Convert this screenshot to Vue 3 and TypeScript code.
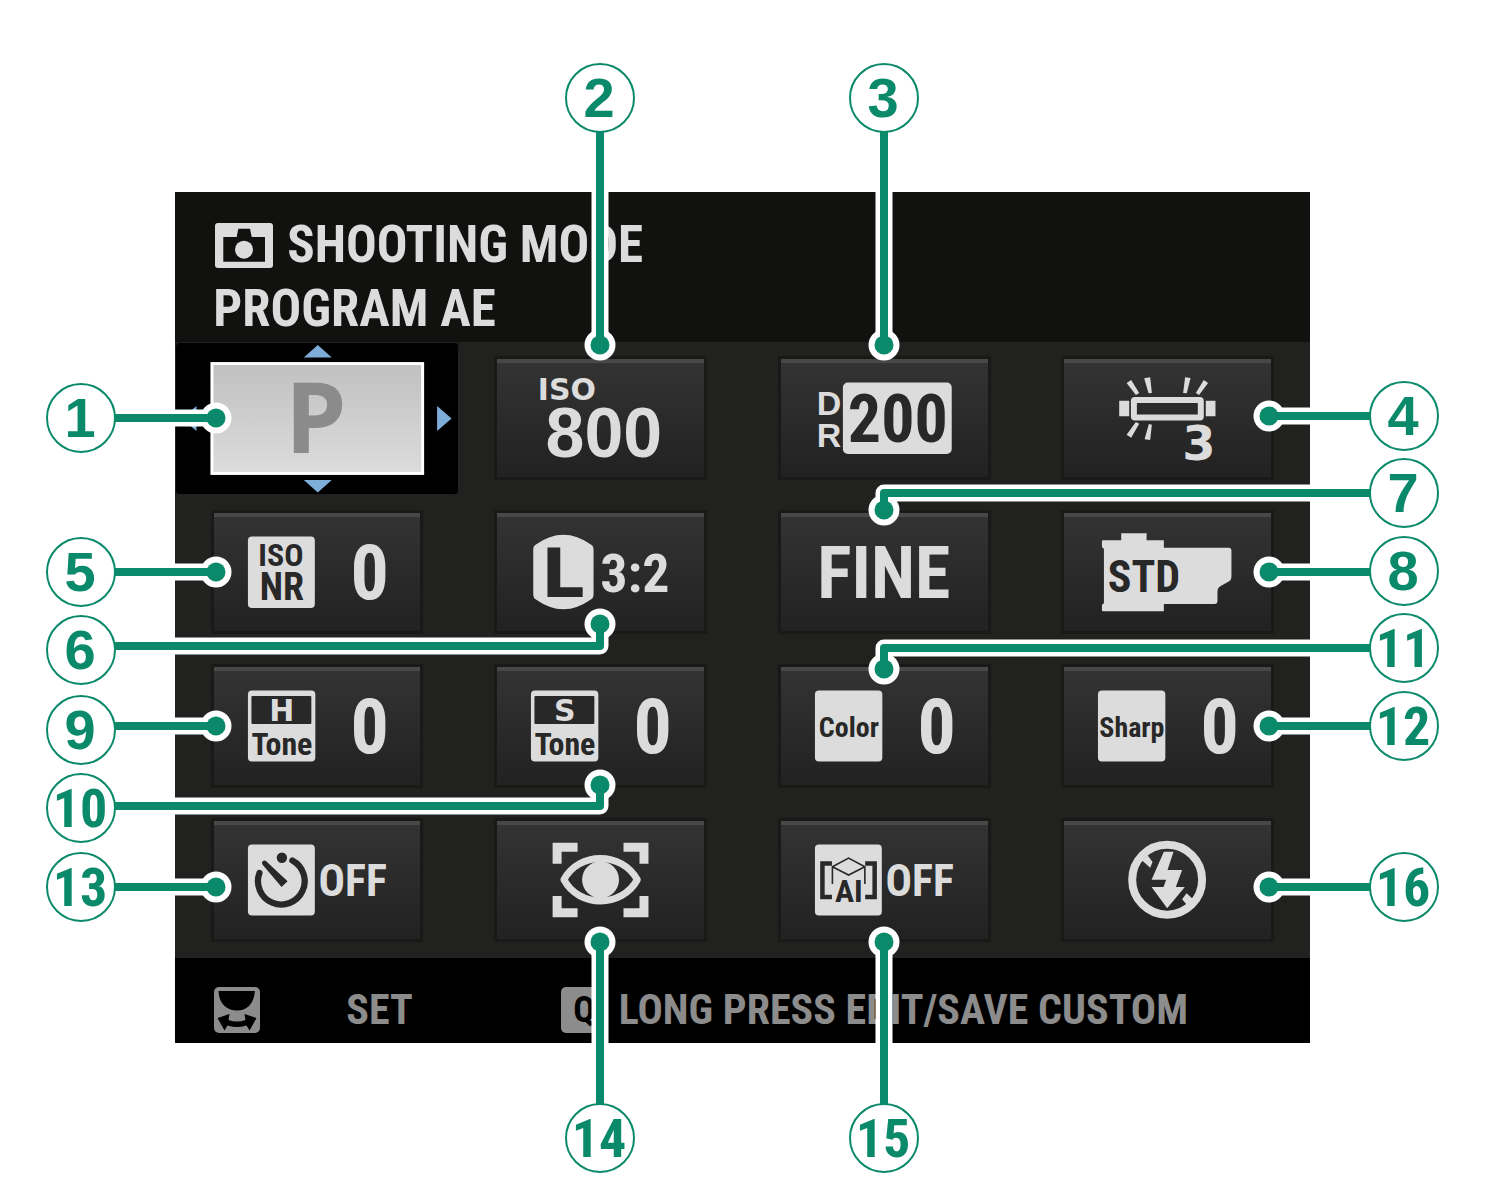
<script setup lang="ts">
interface Callout {
  n: number
  x: number
  y: number
  path: string
  dot: [number, number]
}

type Kind =
  | 'mode' | 'iso' | 'range' | 'balance' | 'noise' | 'size' | 'quality' | 'film'
  | 'tone' | 'label' | 'timer' | 'eye' | 'subject' | 'flash'

interface Tile {
  kind: Kind
  name: string
  mark?: string
}

const tiles: Tile[] = [
  { kind: 'mode', name: 'Shooting mode' },
  { kind: 'iso', name: 'ISO' },
  { kind: 'range', name: 'Dynamic range' },
  { kind: 'balance', name: 'White balance' },
  { kind: 'noise', name: 'Noise reduction' },
  { kind: 'size', name: 'Image size' },
  { kind: 'quality', name: 'Image quality' },
  { kind: 'film', name: 'Film simulation' },
  { kind: 'tone', name: 'Highlights', mark: 'H' },
  { kind: 'tone', name: 'Shadows', mark: 'S' },
  { kind: 'label', name: 'Color', mark: 'Color' },
  { kind: 'label', name: 'Sharpness', mark: 'Sharp' },
  { kind: 'timer', name: 'Self-timer' },
  { kind: 'eye', name: 'Face and eye detection' },
  { kind: 'subject', name: 'Subject detection' },
  { kind: 'flash', name: 'Flash mode' },
]

const callouts: Callout[] = [
  { n: 1, x: 81, y: 418, path: 'M115 418H216', dot: [216, 418] },
  { n: 2, x: 600, y: 98, path: 'M600 132V345', dot: [600, 345] },
  { n: 3, x: 884, y: 98, path: 'M884 132V345', dot: [884, 345] },
  { n: 4, x: 1404, y: 416, path: 'M1370 416H1269', dot: [1269, 416] },
  { n: 5, x: 81, y: 572, path: 'M115 572H216', dot: [216, 572] },
  { n: 6, x: 81, y: 650, path: 'M115 646H600V624', dot: [600, 624] },
  { n: 7, x: 1404, y: 493, path: 'M1370 493H884V510', dot: [884, 510] },
  { n: 8, x: 1404, y: 571, path: 'M1370 572H1269', dot: [1269, 572] },
  { n: 9, x: 81, y: 730, path: 'M115 726H216', dot: [216, 726] },
  { n: 10, x: 81, y: 808, path: 'M115 806H600V785', dot: [600, 785] },
  { n: 11, x: 1404, y: 648, path: 'M1370 648H884V669', dot: [884, 669] },
  { n: 12, x: 1404, y: 726, path: 'M1370 726H1269', dot: [1269, 726] },
  { n: 13, x: 81, y: 887, path: 'M115 887H216', dot: [216, 887] },
  { n: 14, x: 600, y: 1138, path: 'M600 1104V942', dot: [600, 942] },
  { n: 15, x: 884, y: 1138, path: 'M884 1104V942', dot: [884, 942] },
  { n: 16, x: 1404, y: 887, path: 'M1370 887H1269', dot: [1269, 887] },
]
</script>

<template>
  <main class="diagram">
    <section class="screen">
      <header class="head">
        <h1 class="title">
          <svg class="camera" viewBox="0 0 58 45" aria-hidden="true">
            <rect width="58" height="45" rx="3" fill="#dcdcdc" />
            <path d="M8.3 14H21.7L23.3 5.7H35L36.7 14H50V38.7H8.3z" fill="#111110" />
            <circle cx="29" cy="26.7" r="9" fill="#dcdcdc" />
          </svg>
          <span>SHOOTING MODE</span>
        </h1>
        <p class="value">PROGRAM AE</p>
      </header>

      <div class="grid">
        <button
          v-for="tile in tiles"
          :key="tile.name"
          type="button"
          :aria-label="tile.name"
          :class="tile.kind === 'mode' ? 'selected' : 'tile'"
        >
          <svg v-if="tile.kind === 'mode'" viewBox="0 0 284 153">
            <defs>
              <linearGradient id="lit" x1="0" y1="0" x2="0" y2="1">
                <stop offset="0" stop-color="#c0c0c0" />
                <stop offset="1" stop-color="#dcdcdc" />
              </linearGradient>
            </defs>
            <rect x="37" y="21.500" width="211" height="110" fill="url(#lit)" stroke="#fff" stroke-width="3" />
            <path
              d="M143 3L157 15.500H129zM143 150.500L157 138H129zM277 76.500L262.500 64V89zM7 76.500L21.500 64V89z"
              fill="#7eadd9"
            />
            <text class="humanist" x="141" y="111" font-size="98" fill="#8b8b8b">P</text>
          </svg>

          <svg v-else viewBox="0 0 213 124">
            <template v-if="tile.kind === 'iso'">
              <text class="wide" x="73" y="44" font-size="30">ISO</text>
              <text class="sans" x="110" y="101" font-size="70">800</text>
            </template>

            <template v-else-if="tile.kind === 'range'">
              <text class="sans" x="51" y="59" font-size="34">D</text>
              <text class="sans" x="51" y="91" font-size="34">R</text>
              <rect x="65" y="26.500" width="109" height="71.500" rx="5" />
              <text class="narrow ink" x="120" y="86" font-size="66">200</text>
            </template>

            <template v-else-if="tile.kind === 'balance'">
              <rect x="73" y="44" width="67" height="17.500" rx="1" fill="none" stroke="#dcdcdc" stroke-width="6" />
              <path d="M58.300 44.700H68.300V60.300H58.300zM145 44.700H154.700V60.300H145z" />
              <path
                d="M65.700 27L70.300 24 78.300 37 75 39zM83.300 22.300L89.300 21.300 91 37 87.700 37.300zM124.300 21.300L129.700 22 126 37.300 122.300 37zM143 24L147.300 27 138.300 39 135 37zM75 66L78.300 67.700 70.300 81.700 65.700 78.700zM88 68L91 68.700 89.300 84 83.700 83.300z"
              />
              <text class="wide" x="138" y="104" font-size="48">3</text>
            </template>

            <template v-else-if="tile.kind === 'noise'">
              <rect x="37" y="26.500" width="67" height="71.500" rx="4" />
              <text class="narrow ink" x="70" y="56" font-size="32">ISO</text>
              <text class="narrow ink" x="71" y="90" font-size="38">NR</text>
              <text class="narrow" x="159" y="89" font-size="76">0</text>
            </template>

            <template v-else-if="tile.kind === 'size'">
              <path d="M39.300 39Q39.300 36 42 34.500Q69.500 15 97 34.500Q99.700 36 99.700 39V85Q99.700 88 97 89.500Q69.500 109 42 89.500Q39.300 88 39.300 85z" />
              <text class="wide ink" x="69" y="87" font-size="68">L</text>
              <text class="narrow" x="141" y="82" font-size="54">3:2</text>
            </template>

            <text v-else-if="tile.kind === 'quality'" class="narrow" x="106" y="88" font-size="72">FINE</text>

            <template v-else-if="tile.kind === 'film'">
              <path
                d="M60.300 23.300H85.700V30.300H103V37.700H168Q170.700 37.700 170.700 40.700V67Q170.700 70 168 71.500L160 76Q156.700 78 156.700 81.500V91Q156.700 94 153.700 94H103V101.300H42Q41 101.300 41 100.300V95L43 93V39L41 37V31.300Q41 30.300 42 30.300H60.300z"
              />
              <text class="narrow ink" x="83" y="82" font-size="44">STD</text>
            </template>

            <template v-else-if="tile.kind === 'tone'">
              <rect x="37" y="26.500" width="67.500" height="71" rx="4" />
              <rect class="ink" x="40.500" y="32" width="60" height="28" rx="1" />
              <text class="wide" x="71" y="57" font-size="30">{{ tile.mark }}</text>
              <text class="narrow ink" x="71" y="91" font-size="32">Tone</text>
              <text class="narrow" x="159" y="89" font-size="76">0</text>
            </template>

            <template v-else-if="tile.kind === 'label'">
              <rect x="37" y="26.500" width="67.500" height="71" rx="4" />
              <text class="narrow ink" x="71" y="73" font-size="28">{{ tile.mark }}</text>
              <text class="narrow" x="159" y="89" font-size="76">0</text>
            </template>

            <template v-else-if="tile.kind === 'timer'">
              <rect x="37" y="26.500" width="67" height="71" rx="4" />
              <path
                d="M81.500 42.500A23.400 23.400 0 1 1 48.500 55"
                fill="none" stroke="#282828" stroke-width="6.300" stroke-linecap="round"
              />
              <circle class="ink" cx="71" cy="39.700" r="5.200" />
              <path class="ink" d="M51.500 46.500Q50.500 44.500 51.700 43.300 53 42 55 43L76.700 63.300 70.700 69z" />
              <text class="narrow" x="142" y="78" font-size="44">OFF</text>
            </template>

            <template v-else-if="tile.kind === 'eye'">
              <path
                d="M63.200 45.700V29.200H83.700M129.700 29.200H150.200V45.700M150.200 78V94.800H129.700M83.700 94.800H63.200V78"
                fill="none" stroke="#dcdcdc" stroke-width="9"
              />
              <path
                d="M70 61.700C85 33.300 128 33.300 143.500 61.700C128 90 85 90 70 61.700z"
                fill="none" stroke="#dcdcdc" stroke-width="7" stroke-linejoin="round"
              />
              <circle cx="106.700" cy="61.700" r="18.500" />
            </template>

            <template v-else-if="tile.kind === 'subject'">
              <rect x="37" y="26.500" width="67" height="71" rx="4" />
              <path
                d="M54 45.500H44.500V79H54M87.300 45.500H96.800V79H87.300"
                fill="none" stroke="#282828" stroke-width="4.500"
              />
              <path
                d="M54.500 66V48.700L70.700 40 87 48.700V66M54.500 48.700L70.700 57 87 48.700"
                fill="none" stroke="#282828" stroke-width="1.600"
              />
              <text class="narrow ink" x="71" y="84" font-size="32">AI</text>
              <text class="narrow" x="142" y="78" font-size="44">OFF</text>
            </template>

            <template v-else>
              <circle cx="106.300" cy="61.700" r="35" fill="none" stroke="#dcdcdc" stroke-width="8" />
              <path
                d="M103 33.700H112.700L106.700 52H121.300L115 69H124L106.300 90.300 90.700 69H102.700L105.300 61.700H90.700zM86.700 37.300L91.700 44 89.300 49.700 81 42.300zM125.700 75.300L133 81.700 126.300 87.300 121.300 81.300z"
              />
            </template>
          </svg>
        </button>
      </div>

      <footer class="foot">
        <span class="hint dial">
          <svg viewBox="0 0 46 46" aria-hidden="true">
            <rect width="46" height="46" rx="5" fill="#8c8c8c" />
            <path d="M4.500 4H41Q40 14 35 19Q30 23.500 23 23.500Q16 23.500 10.500 19Q5 14 4.500 4z" />
            <path d="M3.500 31L15.500 27 14.500 33Q23 36 31.500 33L30.500 27 42.500 31 35.500 43.500 32.500 38.500Q23 41.500 13.500 38.500L10.500 43.500z" />
          </svg>
          <span>SET</span>
        </span>
        <span class="hint">
          <svg viewBox="0 0 46 46" aria-hidden="true">
            <rect width="46" height="46" rx="5" fill="#8c8c8c" />
            <text class="narrow" x="23" y="35" font-size="36" fill="#000">Q</text>
          </svg>
          <span>LONG PRESS EDIT/SAVE CUSTOM</span>
        </span>
      </footer>
    </section>

    <svg class="callouts" viewBox="0 0 1507 1192">
      <g v-for="c in callouts" :key="c.n">
        <path class="casing" :d="c.path" />
        <circle :cx="c.dot[0]" :cy="c.dot[1]" r="15.500" fill="#fff" />
        <path class="leader" :d="c.path" />
        <circle :cx="c.dot[0]" :cy="c.dot[1]" r="9.500" fill="#0b8a6b" />
        <circle class="ring" :cx="c.x" :cy="c.y" r="34" />
        <text v-if="c.n > 9" class="narrow" :x="c.x - 1" :y="c.y + 19" font-size="54">{{ c.n }}</text>
        <text v-else class="sans" :x="c.x - 1" :y="c.y + 19" font-size="56">{{ c.n }}</text>
      </g>
    </svg>
  </main>
</template>

<style>
body {
  margin: 0;
  background: #fff;
}
</style>

<style scoped>
.diagram {
  position: relative;
  box-sizing: border-box;
  width: 100%;
  padding: 192px 13.1% 149px 11.63%;
  font-family: "Roboto Condensed", Roboto, sans-serif;
  font-weight: 700;
}

.screen {
  background: #212120;
}

.head {
  box-sizing: border-box;
  height: 150px;
  padding: 21px 40px 0 38px;
  background: #111110;
  color: #dcdcdc;
  font-size: 51px;
  line-height: 64px;
  white-space: nowrap;
}

.title {
  display: flex;
  align-items: center;
  gap: 14px;
  margin: 0;
  font-size: 51px;
}

.camera {
  width: 58px;
  height: 45px;
  margin-left: 2px;
}

.value {
  margin: 0;
}

.grid {
  display: grid;
  grid-template-columns: repeat(4, 1fr);
  grid-auto-rows: 154px;
}

.tile,
.selected {
  padding: 0;
  border: 0;
  font: inherit;
}

.tile {
  width: 75%;
  height: 124px;
  margin: 14px auto 0;
  background: linear-gradient(#343434, #212121);
  box-shadow: inset 0 0 0 3px #191918, inset 0 7px 0 #484848;
}

.selected {
  height: 153px;
  border-radius: 5px;
  background: #000;
  box-shadow: inset 0 0 0 1px #222;
}

.tile svg,
.selected svg {
  display: block;
  width: 100%;
  height: 100%;
  fill: #dcdcdc;
}

text {
  text-anchor: middle;
  font-weight: 700;
}

.narrow {
  font-family: "Roboto Condensed", Roboto, sans-serif;
}

.sans {
  font-family: "Liberation Sans", sans-serif;
}

.wide {
  font-family: "DejaVu Sans", sans-serif;
}

.humanist {
  font-family: "Noto Sans", sans-serif;
}

.tile svg .ink {
  fill: #282828;
}

.foot {
  display: flex;
  align-items: center;
  gap: 148px;
  box-sizing: border-box;
  height: 85px;
  padding: 18px 39px 0;
  background: #000;
  color: #8c8c8c;
  font-size: 42px;
  line-height: 48px;
  white-space: nowrap;
}

.hint {
  display: flex;
  align-items: center;
  gap: 12px;
}

.dial {
  gap: 86px;
}

.hint svg {
  width: 46px;
  height: 46px;
}

.callouts {
  position: absolute;
  inset: 0;
  width: 100%;
  height: 100%;
  pointer-events: none;
  fill: #0b8a6b;
}

.casing,
.leader {
  fill: none;
  stroke-linejoin: round;
}

.casing {
  stroke: #fff;
  stroke-width: 17px;
}

.leader {
  stroke: #0b8a6b;
  stroke-width: 8px;
}

.ring {
  fill: #fff;
  stroke: #0b8a6b;
  stroke-width: 2px;
}
</style>
